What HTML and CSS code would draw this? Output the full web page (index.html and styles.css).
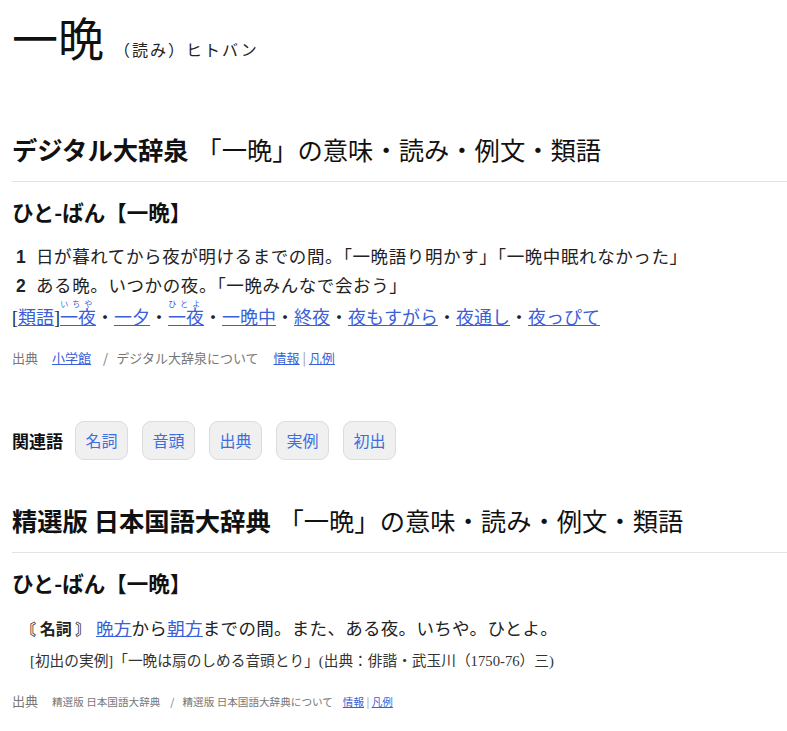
FILE: index.html
```html
<!DOCTYPE html>
<html lang="ja">
<head>
  <meta charset="UTF-8">
  <meta name="viewport" content="width=device-width, initial-scale=1">
  <title>一晩</title>
  <link rel="stylesheet" href="styles.css">
</head>
<body>
  <div class="page">
    <div class="headword">
      <h1>一晩</h1>
      <span class="reading">（読み）ヒトバン</span>
    </div>

    <div class="dict">
      <h2 class="dict-title"><b>デジタル大辞泉</b> <span class="sub">「一晩」の意味・読み・例文・類語</span></h2>
      <h3 class="entry">ひと-ばん【一晩】</h3>
      <p class="sense"><span class="num">1</span>日が暮れてから夜が明けるまでの間。「一晩語り明かす」「一晩中眠れなかった」</p>
      <p class="sense"><span class="num">2</span>ある晩。いつかの夜。「一晩みんなで会おう」</p>
      <p class="ruigo">[<a href="#">類語</a>]<a href="#"><ruby>一夜<rt>いちや</rt></ruby></a>・<a href="#">一夕</a>・<a href="#"><ruby>一夜<rt>ひとよ</rt></ruby></a>・<a href="#">一晩中</a>・<a href="#">終夜</a>・<a href="#">夜もすがら</a>・<a href="#">夜通し</a>・<a href="#">夜っぴて</a></p>
      <div class="source">
        <span class="label">出典</span>
        <a class="src-name" href="#">小学館</a>
        <span class="slash">/</span>
        <span class="about">デジタル大辞泉について</span>
        <span class="links"><a href="#">情報</a> | <a href="#">凡例</a></span>
      </div>
    </div>

    <div class="related">
      <span class="related-label">関連語</span>
      <a class="tag" href="#">名詞</a>
      <a class="tag" href="#">音頭</a>
      <a class="tag" href="#">出典</a>
      <a class="tag" href="#">実例</a>
      <a class="tag" href="#">初出</a>
    </div>

    <div class="dict dict-second">
      <h2 class="dict-title"><b>精選版 日本国語大辞典</b> <span class="sub">「一晩」の意味・読み・例文・類語</span></h2>
      <h3 class="entry">ひと-ばん【一晩】</h3>
      <p class="sense sense-nikkoku"><span class="pos">〘 名詞 〙</span> <a href="#">晩方</a>から<a href="#">朝方</a>までの間。また、ある夜。いちや。ひとよ。</p>
      <p class="example">[初出の実例]「一晩は扇のしめる音頭とり」(出典：俳諧・武玉川（1750‐76）三)</p>
      <div class="source source-small">
        <span class="label">出典</span>
        <span class="src-name">精選版 日本国語大辞典</span>
        <span class="slash">/</span>
        <span class="about">精選版 日本国語大辞典について</span>
        <span class="links"><a href="#">情報</a> | <a href="#">凡例</a></span>
      </div>
    </div>
  </div>
</body>
</html>
```

FILE: styles.css
```css
body {
  margin: 0;
  background: #fff;
  color: #222;
  font-family: "Noto Sans CJK JP", "Noto Sans", sans-serif;
}
.page {
  padding: 13px 0 0 12px;
}
a {
  color: #3a5fd8;
}

.headword {
  display: flex;
  align-items: baseline;
  gap: 10px;
  height: 56px;
}
h1 {
  margin: 0;
  font-size: 46px;
  line-height: 56px;
  font-weight: normal;
  color: #111;
  font-family: "Liberation Serif", "Noto Sans CJK JP", serif;
}
.reading {
  font-size: 16px;
  letter-spacing: 2px;
  color: #222;
  font-family: "Liberation Serif", "Noto Sans CJK JP", serif;
}

.dict {
  margin-top: 62px;
}
.dict-title {
  margin: 0;
  font-size: 25.3px;
  line-height: 36px;
  padding-bottom: 14px;
  border-bottom: 1px solid #e3e3e3;
  color: #111;
}
.dict-title b {
  font-weight: bold;
}
.dict-title .sub {
  font-weight: normal;
  margin-left: 2px;
}
.entry {
  margin: 16px 0 17px;
  font-size: 21.5px;
  line-height: 28px;
  font-weight: bold;
  color: #111;
}
.sense {
  margin: 0;
  padding-left: 4px;
  font-size: 17.5px;
  line-height: 29px;
  letter-spacing: 0.6px;
  font-family: "Liberation Serif", "Noto Sans CJK JP", serif;
}
.num {
  display: inline-block;
  width: 20px;
  font-weight: bold;
  font-family: "Liberation Sans", "Noto Sans CJK JP", sans-serif;
}
.ruigo {
  margin: -1px 0 0;
  font-size: 18px;
  line-height: 30px;
  letter-spacing: 0;
  font-family: "Liberation Serif", "Noto Sans CJK JP", serif;
}
.ruigo rt {
  font-size: 8px;
  color: #3a5fd8;
  letter-spacing: 3.5px;
}

.source {
  margin-top: 15px;
  display: flex;
  align-items: baseline;
  font-size: 13px;
  line-height: 20px;
  color: #777;
}
.source .src-name {
  margin-left: 14px;
}
.source .slash {
  margin-left: 12px;
}
.source .about {
  margin-left: 8px;
}
.source .links {
  margin-left: 15px;
  color: #999;
}

.related {
  margin-top: 53px;
  display: flex;
  align-items: center;
  gap: 14px;
}
.related-label {
  font-size: 17px;
  font-weight: bold;
  color: #111;
  margin-right: -2px;
}
.tag {
  display: block;
  width: 53px;
  height: 39px;
  box-sizing: border-box;
  line-height: 37px;
  text-align: center;
  font-size: 16px;
  color: #3b6fe0;
  text-decoration: none;
  background: #f0f0f0;
  border: 1px solid #dcdcdc;
  border-radius: 9px;
}

.dict-second {
  margin-top: 42px;
}
.sense-nikkoku {
  padding-left: 8px;
  margin-top: -1px;
  line-height: 30px;
  letter-spacing: 0.3px;
}
.pos {
  font-weight: bold;
  font-family: "Noto Sans CJK JP", sans-serif;
  font-size: 16px;
  letter-spacing: 0;
}
.example {
  margin: 6px 0 0;
  padding-left: 18px;
  font-size: 14.7px;
  line-height: 22px;
  color: #333;
  font-family: "Liberation Serif", "Noto Sans CJK JP", serif;
}
.source-small {
  margin-top: 19px;
  font-size: 10.6px;
}
.source-small .label {
  font-size: 13px;
}
.source-small .slash {
  margin-left: 10px;
}
.source-small .links {
  margin-left: 10px;
}
```
